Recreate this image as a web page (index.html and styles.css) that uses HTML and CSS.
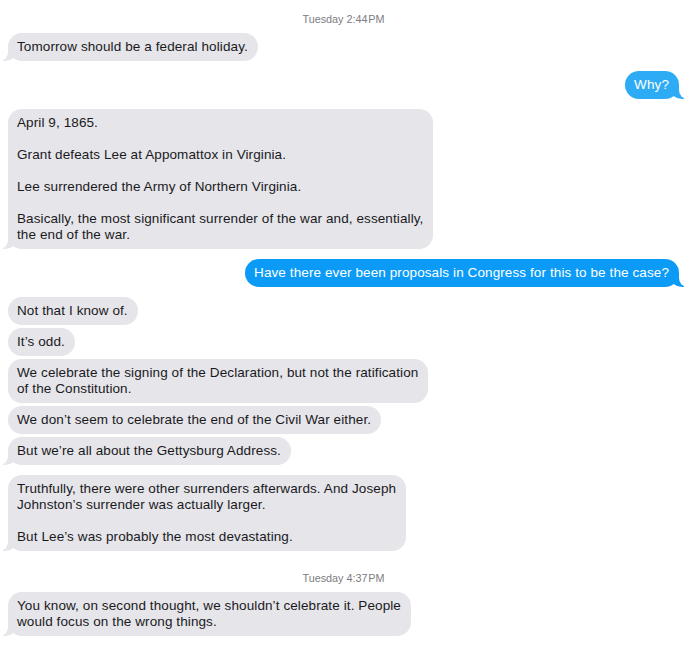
FILE: index.html
```html
<!DOCTYPE html>
<html>
<head>
<meta charset="utf-8">
<link rel="stylesheet" href="styles.css">
</head>
<body>
<div class="chat">
  <div class="stamp">Tuesday 2:44&#8202;PM</div>
  <div class="group in">
    <div class="bubble tail">Tomorrow should be a federal holiday.</div>
  </div>
  <div class="group out">
    <div class="bubble light tail">Why?</div>
  </div>
  <div class="group in">
    <div class="bubble tail">April 9, 1865.<br><br>Grant defeats Lee at Appomattox in Virginia.<br><br>Lee surrendered the Army of Northern Virginia.<br><br>Basically, the most significant surrender of the war and, essentially,<br>the end of the war.</div>
  </div>
  <div class="group out">
    <div class="bubble tail">Have there ever been proposals in Congress for this to be the case?</div>
  </div>
  <div class="group in">
    <div class="bubble">Not that I know of.</div>
    <div class="bubble">It’s odd.</div>
    <div class="bubble">We celebrate the signing of the Declaration, but not the ratification<br>of the Constitution.</div>
    <div class="bubble">We don’t seem to celebrate the end of the Civil War either.</div>
    <div class="bubble tail">But we’re all about the Gettysburg Address.</div>
  </div>
  <div class="group in">
    <div class="bubble tail">Truthfully, there were other surrenders afterwards. And Joseph<br>Johnston’s surrender was actually larger.<br><br>But Lee’s was probably the most devastating.</div>
  </div>
  <div class="stamp later">Tuesday 4:37&#8202;PM</div>
  <div class="group in">
    <div class="bubble tail">You know, on second thought, we shouldn’t celebrate it. People<br>would focus on the wrong things.</div>
  </div>
</div>
</body>
</html>
```

FILE: styles.css
```css
html, body {
  margin: 0;
  background: #ffffff;
}
body {
  font-family: "Liberation Sans", Arial, sans-serif;
  font-size: 13.5px;
  letter-spacing: 0.1px;
  color: #1a1a1c;
}
.chat {
  display: flex;
  flex-direction: column;
  padding: 12px 12px 0 8px;
}
.stamp {
  align-self: center;
  font-size: 10.8px;
  letter-spacing: 0;
  line-height: 12px;
  color: #7c7c82;
  margin: 1px 0 8px 0;
  padding-left: 0;
}
.stamp.later {
  margin-top: 11px;
}
.group {
  display: flex;
  flex-direction: column;
  gap: 3px;
  margin-bottom: 10px;
}
.group.in {
  align-items: flex-start;
}
.group.out {
  align-items: flex-end;
}
.bubble {
  position: relative;
  background: #e5e5ea;
  border-radius: 14px;
  padding: 6px 10px 6px 9px;
  line-height: 16px;
  white-space: nowrap;
}
.out .bubble {
  background: #0b9bf7;
  color: #ffffff;
  padding: 6px 10px 6px 9px;
}
.out .bubble.light {
  background: #2eabf5;
}
.bubble.tail::before,
.bubble.tail::after {
  content: "";
  position: absolute;
  bottom: 0;
  height: 14px;
}
.in .bubble.tail::before {
  left: -5px;
  width: 14px;
  background: #e5e5ea;
  border-bottom-right-radius: 12px 10px;
}
.in .bubble.tail::after {
  left: -12px;
  width: 12px;
  background: #ffffff;
  border-bottom-right-radius: 8px 9px;
}
.out .bubble.tail::before {
  right: -5px;
  width: 14px;
  background: inherit;
  border-bottom-left-radius: 12px 10px;
}
.out .bubble.tail::after {
  right: -12px;
  width: 12px;
  background: #ffffff;
  border-bottom-left-radius: 8px 9px;
}
```
